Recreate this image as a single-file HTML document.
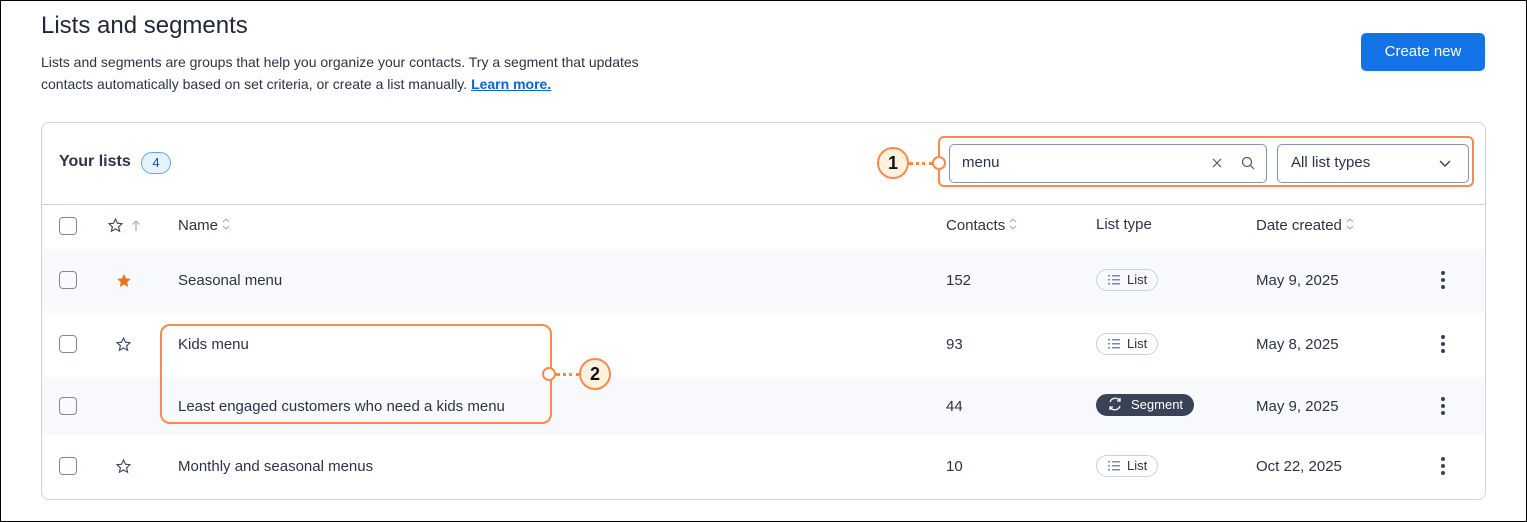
<!DOCTYPE html><html><head><style>
body{margin:0;width:1527px;height:522px;font-family:"Liberation Sans",sans-serif;color:#2b3346;background:#fff;position:relative;overflow:hidden}
.frame{position:absolute;left:0;top:0;width:1525px;height:520px;border:1px solid #000}
.a{position:absolute}
h1{position:absolute;left:41px;top:12px;margin:0;font-size:24px;font-weight:normal;color:#1f2738}
.desc{left:41px;top:51px;font-size:14px;line-height:22px;color:#2b3346}
.desc a{color:#0b63d6;font-weight:bold;text-decoration:underline}
.btn{left:1361px;top:33px;width:124px;height:38px;background:#1473e6;color:#fff;border-radius:5px;font-size:15px;line-height:38px;text-align:center}
.card{left:41px;top:122px;width:1443px;height:376px;border:1px solid #cfd5de;border-radius:8px;overflow:hidden}
.row{position:absolute;left:0;width:1443px}
.cb{position:absolute;left:17px;width:18px;height:18px;border:1.5px solid #7d88a3;border-radius:4px;box-sizing:border-box}
.t{position:absolute;font-size:15px;color:#2b3346}
.pill{position:absolute;left:1054px;height:22px;border:1px solid #c9cfdc;border-radius:12px;box-sizing:border-box;font-size:13px;line-height:20px;padding:0 10px 0 30px}
.dots{position:absolute;left:1399px;width:4px}
.dots i{display:block;width:4px;height:4px;border-radius:2px;background:#3a4257;margin-bottom:3px}
.or{border:2px solid #f68a4f}
.num{width:32px;height:32px;border-radius:50%;background:#fdf2dd;border:2px solid #f68a4f;box-sizing:border-box;text-align:center;line-height:28px;font-weight:bold;font-size:18px;color:#111}
.ring{width:14px;height:14px;border-radius:50%;border:2px solid #f68a4f;background:#fff;box-sizing:border-box}
.dash{height:0;border-top:3px dotted #f68a4f}
.srt{display:inline-block;vertical-align:-2px;margin-left:3px}
</style></head><body>
<div class="frame"></div>
<h1>Lists and segments</h1>
<div class="a desc">Lists and segments are groups that help you organize your contacts. Try a segment that updates<br>contacts automatically based on set criteria, or create a list manually. <a>Learn more.</a></div>
<div class="a btn">Create new</div>
<div class="a card">
 <div class="t" style="left:17px;top:30px;font-size:16px;font-weight:bold;color:#2b3346">Your lists</div>
 <div class="a" style="left:99px;top:29px;width:30px;height:22px;border:1px solid #5aa6f0;background:#e6f3ff;border-radius:11px;box-sizing:border-box;text-align:center;font-size:13px;line-height:20px;color:#1f4f9b">4</div>
 <div class="a" style="left:907px;top:21px;width:318px;height:39px;border:1px solid #8a93ad;border-radius:5px;box-sizing:border-box"></div>
 <div class="t" style="left:920px;top:31px">menu</div>
 <svg class="a" style="left:1170px;top:35px" width="10" height="10"><path d="M1 1l8 8M9 1l-8 8" stroke="#555" stroke-width="1.2"/></svg>
 <svg class="a" style="left:1199px;top:33px" width="14" height="14"><circle cx="6" cy="6" r="4.5" fill="none" stroke="#555" stroke-width="1.2"/><path d="M9.5 9.5L13 13" stroke="#555" stroke-width="1.2"/></svg>
 <div class="a" style="left:1235px;top:21px;width:192px;height:39px;border:1px solid #8a93ad;border-radius:5px;box-sizing:border-box"></div>
 <div class="t" style="left:1249px;top:31px">All list types</div>
 <svg class="a" style="left:1397px;top:37px" width="12" height="8"><path d="M1 1l5 5 5-5" fill="none" stroke="#444" stroke-width="1.4"/></svg>
 <div class="row" style="top:81px;height:1px;background:#cfd5de"></div>
 <div class="row" style="top:82px;height:44px">
  <div class="cb" style="top:12px"></div>
  <svg class="a" style="left:66px;top:13px" width="15" height="15"><path d="M7.5 1l1.9 4.2 4.6.5-3.4 3.1 1 4.5-4.1-2.4-4.1 2.4 1-4.5L1 5.7l4.6-.5z" fill="none" stroke="#3a4257" stroke-width="1.1"/></svg>
  <svg class="a" style="left:89px;top:14px" width="10" height="13"><path d="M5 12V2M1.5 5.5L5 2l3.5 3.5" fill="none" stroke="#a5adc0" stroke-width="1.2"/></svg>
  <div class="t" style="left:136px;top:11px">Name<svg class="srt" width="10" height="16"><path d="M2 6l3-3 3 3M2 10l3 3 3-3" fill="none" stroke="#a5adc0" stroke-width="1.2"/></svg></div>
  <div class="t" style="left:904px;top:11px">Contacts<svg class="srt" width="10" height="16"><path d="M2 6l3-3 3 3M2 10l3 3 3-3" fill="none" stroke="#a5adc0" stroke-width="1.2"/></svg></div>
  <div class="t" style="left:1054px;top:11px">List type</div>
  <div class="t" style="left:1214px;top:11px">Date created<svg class="srt" width="10" height="16"><path d="M2 6l3-3 3 3M2 10l3 3 3-3" fill="none" stroke="#a5adc0" stroke-width="1.2"/></svg></div>
 </div>
 <div class="row" style="top:126px;height:64px;background:#f8f9fc">
  <div class="cb" style="top:22px"></div>
  <svg class="a" style="left:74px;top:24px" width="16" height="16"><path d="M8 1l2 4.4 4.8.5-3.6 3.3 1 4.8L8 11.5 3.8 14l1-4.8L1.2 5.9 6 5.4z" fill="#e8731f"/></svg>
  <div class="t" style="left:136px;top:23px">Seasonal menu</div><div class="t" style="left:904px;top:23px">152</div>
  <div class="pill" style="top:20px">List</div><div class="t" style="left:1214px;top:23px">May 9, 2025</div>
  <div class="dots" style="top:22px"><i></i><i></i><i></i></div>
 </div>
 <div class="row" style="top:190px;height:64px">
  <div class="cb" style="top:22px"></div>
  <svg class="a" style="left:74px;top:24px" width="15" height="15"><path d="M7.5 1l1.9 4.2 4.6.5-3.4 3.1 1 4.5-4.1-2.4-4.1 2.4 1-4.5L1 5.7l4.6-.5z" fill="none" stroke="#3a4257" stroke-width="1.1"/></svg>
  <div class="t" style="left:136px;top:23px">Kids menu</div><div class="t" style="left:904px;top:23px">93</div>
  <div class="pill" style="top:20px">List</div><div class="t" style="left:1214px;top:23px">May 8, 2025</div>
  <div class="dots" style="top:22px"><i></i><i></i><i></i></div>
 </div>
 <div class="row" style="top:254px;height:58px;background:#f8f9fc">
  <div class="cb" style="top:20px"></div>
  <div class="t" style="left:136px;top:21px">Least engaged customers who need a kids menu</div><div class="t" style="left:904px;top:21px">44</div>
  <div class="pill" style="top:17px;background:#3a4257;border-color:#3a4257;color:#fff;padding-left:34px">Segment</div><div class="t" style="left:1214px;top:21px">May 9, 2025</div>
  <div class="dots" style="top:20px"><i></i><i></i><i></i></div>
 </div>
 <div class="row" style="top:312px;height:64px">
  <div class="cb" style="top:22px"></div>
  <svg class="a" style="left:74px;top:24px" width="15" height="15"><path d="M7.5 1l1.9 4.2 4.6.5-3.4 3.1 1 4.5-4.1-2.4-4.1 2.4 1-4.5L1 5.7l4.6-.5z" fill="none" stroke="#3a4257" stroke-width="1.1"/></svg>
  <div class="t" style="left:136px;top:23px">Monthly and seasonal menus</div><div class="t" style="left:904px;top:23px">10</div>
  <div class="pill" style="top:20px">List</div><div class="t" style="left:1214px;top:23px">Oct 22, 2025</div>
  <div class="dots" style="top:22px"><i></i><i></i><i></i></div>
 </div>
</div>
<svg class="a" style="left:1108px;top:275px" width="14" height="10"><g fill="#7d88a3"><rect x="0" y="0" width="2" height="1.5"/><rect x="4" y="0" width="8" height="1.5"/><rect x="0" y="4" width="2" height="1.5"/><rect x="4" y="4" width="8" height="1.5"/><rect x="0" y="8" width="2" height="1.5"/><rect x="4" y="8" width="8" height="1.5"/></g></svg>
<svg class="a" style="left:1108px;top:339px" width="14" height="10"><g fill="#7d88a3"><rect x="0" y="0" width="2" height="1.5"/><rect x="4" y="0" width="8" height="1.5"/><rect x="0" y="4" width="2" height="1.5"/><rect x="4" y="4" width="8" height="1.5"/><rect x="0" y="8" width="2" height="1.5"/><rect x="4" y="8" width="8" height="1.5"/></g></svg>
<svg class="a" style="left:1108px;top:461px" width="14" height="10"><g fill="#7d88a3"><rect x="0" y="0" width="2" height="1.5"/><rect x="4" y="0" width="8" height="1.5"/><rect x="0" y="4" width="2" height="1.5"/><rect x="4" y="4" width="8" height="1.5"/><rect x="0" y="8" width="2" height="1.5"/><rect x="4" y="8" width="8" height="1.5"/></g></svg>
<svg class="a" style="left:1107px;top:396px" width="16" height="16"><path d="M3 6a5.5 5.5 0 0 1 10-1M13 10a5.5 5.5 0 0 1-10 1" fill="none" stroke="#fff" stroke-width="1.3"/><path d="M13 2v3h-3M3 14v-3h3" fill="none" stroke="#fff" stroke-width="1.3"/></svg>
<div class="a or" style="left:938px;top:136px;width:536px;height:51px;border-radius:6px;box-sizing:border-box"></div>
<div class="a num" style="left:877px;top:147px">1</div>
<div class="a dash" style="left:909px;top:162px;width:24px"></div>
<div class="a ring" style="left:932px;top:156px"></div>
<div class="a or" style="left:160px;top:324px;width:392px;height:100px;border-radius:10px;box-sizing:border-box"></div>
<div class="a ring" style="left:542px;top:367px"></div>
<div class="a dash" style="left:556px;top:373px;width:24px"></div>
<div class="a num" style="left:579px;top:358px">2</div>
</body></html>
